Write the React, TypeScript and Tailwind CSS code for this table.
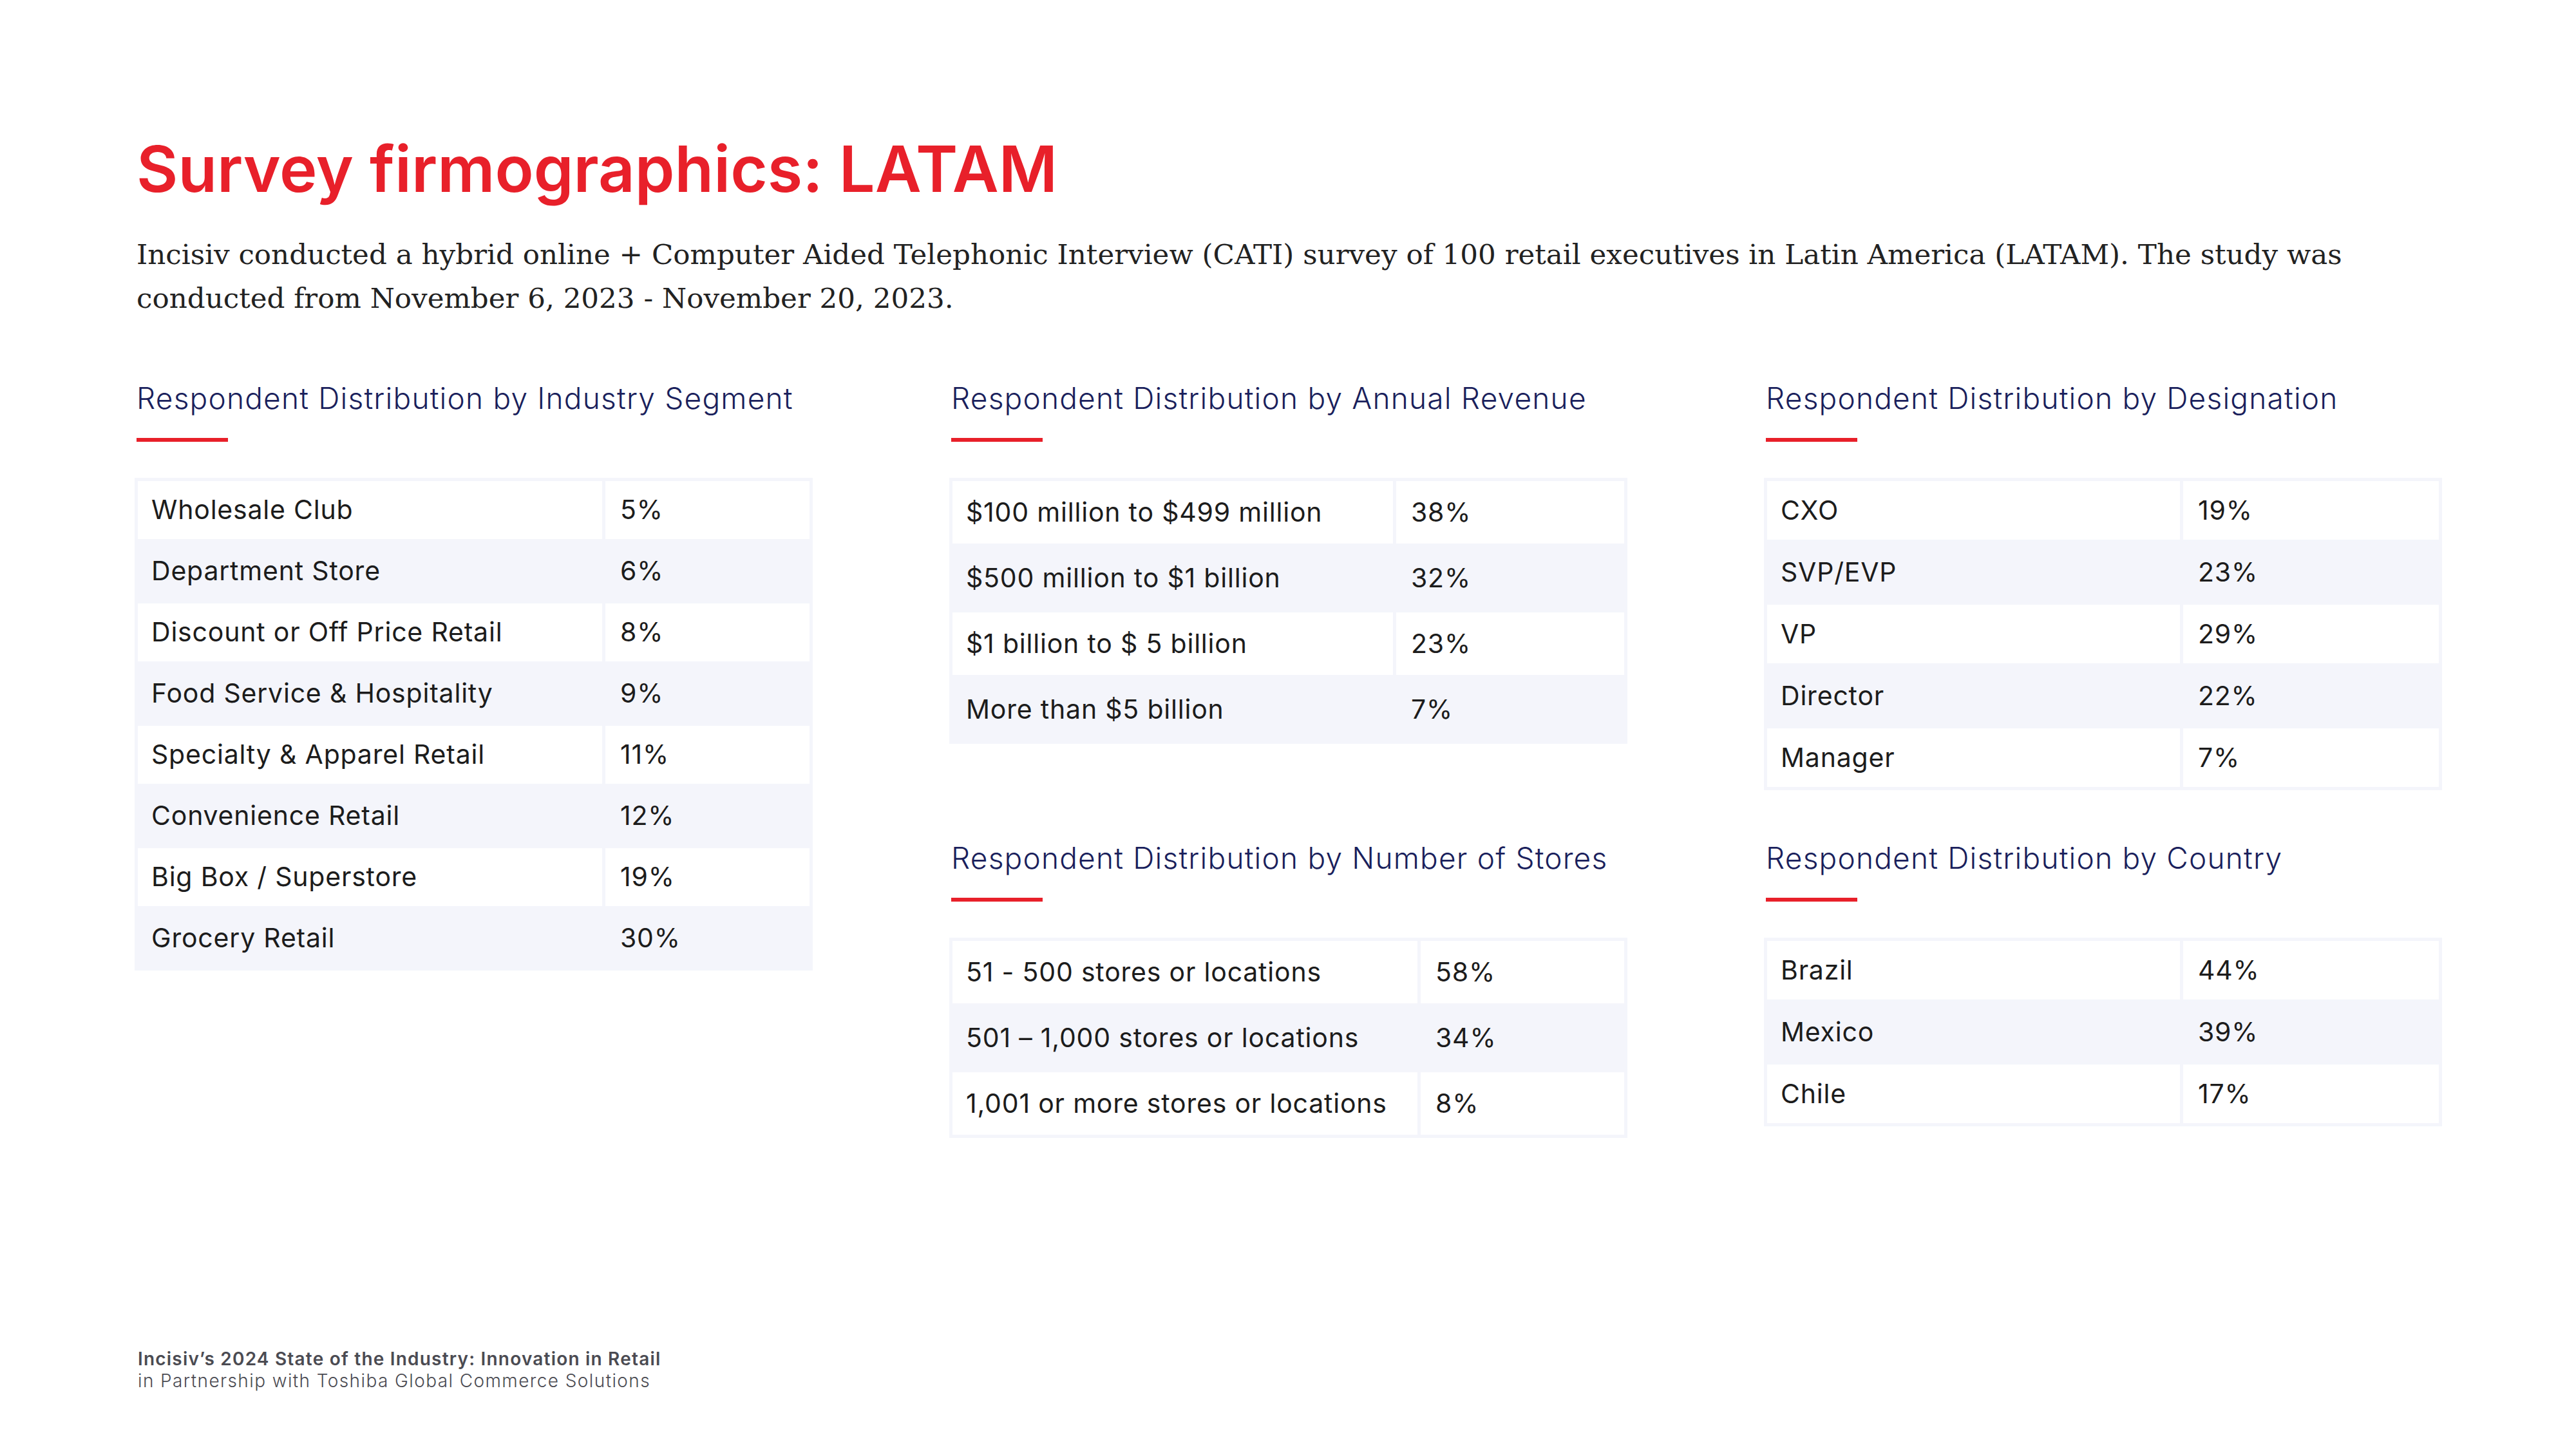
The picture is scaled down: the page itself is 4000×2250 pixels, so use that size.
import React from "react";

type Row = { label: string; value: string };

type Section = {
  title: string;
  rows: Row[];
  labelWidth: string;
  rowHeight: string;
};

const industry: Section = {
  title: "Respondent Distribution by Industry Segment",
  labelWidth: "w-[721px]",
  rowHeight: "h-[90px]",
  rows: [
    { label: "Wholesale Club", value: "5%" },
    { label: "Department Store", value: "6%" },
    { label: "Discount or Off Price Retail", value: "8%" },
    { label: "Food Service & Hospitality", value: "9%" },
    { label: "Specialty & Apparel Retail", value: "11%" },
    { label: "Convenience Retail", value: "12%" },
    { label: "Big Box / Superstore", value: "19%" },
    { label: "Grocery Retail", value: "30%" },
  ],
};

const revenue: Section = {
  title: "Respondent Distribution by Annual Revenue",
  labelWidth: "w-[684px]",
  rowHeight: "h-[97px]",
  rows: [
    { label: "$100 million to $499 million", value: "38%" },
    { label: "$500 million to $1 billion", value: "32%" },
    { label: "$1 billion to $ 5 billion", value: "23%" },
    { label: "More than $5 billion", value: "7%" },
  ],
};

const designation: Section = {
  title: "Respondent Distribution by Designation",
  labelWidth: "w-[641px]",
  rowHeight: "h-[91px]",
  rows: [
    { label: "CXO", value: "19%" },
    { label: "SVP/EVP", value: "23%" },
    { label: "VP", value: "29%" },
    { label: "Director", value: "22%" },
    { label: "Manager", value: "7%" },
  ],
};

const stores: Section = {
  title: "Respondent Distribution by Number of Stores",
  labelWidth: "w-[722px]",
  rowHeight: "h-[97px]",
  rows: [
    { label: "51 - 500 stores or locations", value: "58%" },
    { label: "501 – 1,000 stores or locations", value: "34%" },
    { label: "1,001 or more stores or locations", value: "8%" },
  ],
};

const country: Section = {
  title: "Respondent Distribution by Country",
  labelWidth: "w-[641px]",
  rowHeight: "h-[91px]",
  rows: [
    { label: "Brazil", value: "44%" },
    { label: "Mexico", value: "39%" },
    { label: "Chile", value: "17%" },
  ],
};

const DistributionTable = ({ section, className }: { section: Section; className?: string }) => (
  <div className={className}>
    <h2 className="pl-[3px] text-[46px] leading-[1.15] tracking-[1.2px] font-light text-[#1a1f5c] font-['Inter',sans-serif]">
      {section.title}
    </h2>
    <div className="ml-[3px] mt-[35px] w-[142px] h-[6px] bg-[#e8202a]" />
    <table className="mt-[56px] w-[1053px] border-separate border-spacing-[5px] bg-[#f4f5fb] text-[41px] tracking-[0.8px] text-[#1c1c1c] font-['Inter',sans-serif]">
      <tbody>
        {section.rows.map((row, i) => {
          const cell = i % 2 === 0 ? "bg-white" : "";
          return (
            <tr key={row.label}>
              <td className={`${cell} ${section.labelWidth} ${section.rowHeight} pl-[21px] align-middle`}>
                {row.label}
              </td>
              <td className={`${cell} ${section.rowHeight} pl-[23px] align-middle`}>{row.value}</td>
            </tr>
          );
        })}
      </tbody>
    </table>
  </div>
);

export default function App() {
  return (
    <div className="w-[4000px] h-[2250px] bg-white flex flex-col pl-[209px] pt-[213px] pb-[89px]">
      <h1 className="pl-[3px] text-[99px] leading-none font-semibold text-[#e8202a] font-['Inter',sans-serif]">
        Survey firmographics: LATAM
      </h1>
      <p className="mt-[49px] pl-[3px] w-[3480px] text-[43.6px] leading-[68px] text-[#222222] font-['DejaVu_Serif',serif] font-light">
        Incisiv conducted a hybrid online + Computer Aided Telephonic Interview (CATI) survey of 100 retail executives
        in Latin America (LATAM). The study was conducted from November 6, 2023 - November 20, 2023.
      </p>

      <div className="mt-[95px] grid grid-cols-[1053px_1053px_1053px] grid-rows-[714px_auto] gap-x-[212px]">
        <DistributionTable section={industry} className="row-span-2" />
        <DistributionTable section={revenue} />
        <DistributionTable section={designation} />
        <DistributionTable section={stores} />
        <DistributionTable section={country} />
      </div>

      <div className="mt-auto pl-[5px] text-[28px] leading-[34px] text-[#4b4b52] font-['Inter',sans-serif]">
        <div className="font-semibold tracking-[1.2px]">Incisiv’s 2024 State of the Industry: Innovation in Retail</div>
        <div className="font-light tracking-[1.4px]">in Partnership with Toshiba Global Commerce Solutions</div>
      </div>
    </div>
  );
}
